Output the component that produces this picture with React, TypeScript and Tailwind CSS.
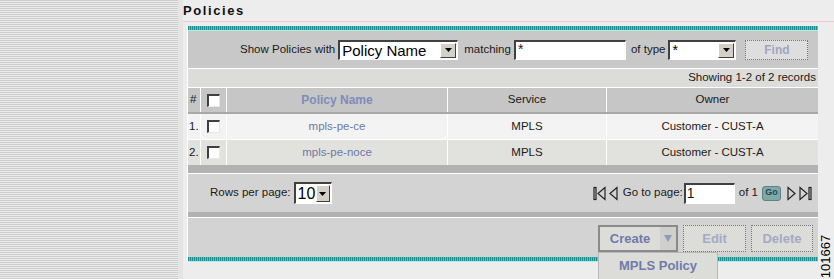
import React from 'react'

const font = { fontFamily: '"Liberation Sans", Arial, sans-serif' }

const Checkbox = () => (
    <span className="inline-block w-[13px] h-[13px] bg-white border-t-2 border-l-2 border-t-[#404040] border-l-[#404040] border-r border-b border-r-[#e8e8e8] border-b-[#e8e8e8]" />
)

const SelectBox = ({ value, className, textClass }: { value: string; className: string; textClass: string }) => (
    <div className={`shrink-0 flex items-stretch bg-white border-t-2 border-l-2 border-t-[#404040] border-l-[#404040] border-r border-b border-r-white border-b-white ${className}`}>
        <span className={`flex-1 pl-[2px] leading-none flex items-center text-black whitespace-nowrap ${textClass}`}>{value}</span>
        <span className="w-[16px] m-[1px] bg-[#d4d0c8] border border-t-white border-l-white border-r-[#404040] border-b-[#404040] flex items-center justify-center">
            <svg width="7" height="4" viewBox="0 0 7 4"><path d="M0 0h7L3.5 4z" fill="#000" /></svg>
        </span>
    </div>
)

const TealBar = () => (
    <div className="h-[5px] bg-[repeating-linear-gradient(90deg,#17908f_0px,#17908f_1px,#5fbfbf_1px,#5fbfbf_2px)] border-b border-b-[#bfe6e6]" />
)

const FirstIcon = () => (
    <svg width="13" height="15" viewBox="0 0 13 15" fill="none" stroke="#222" strokeWidth="1.2">
        <rect x="1" y="1.5" width="2" height="12" />
        <path d="M12 1.5L5 7.5l7 6z" />
    </svg>
)
const PrevIcon = () => (
    <svg width="9" height="15" viewBox="0 0 9 15" fill="none" stroke="#222" strokeWidth="1.2">
        <path d="M8 1.5L1 7.5l7 6z" />
    </svg>
)
const NextIcon = () => (
    <svg width="9" height="15" viewBox="0 0 9 15" fill="none" stroke="#222" strokeWidth="1.2">
        <path d="M1 1.5l7 6-7 6z" />
    </svg>
)
const LastIcon = () => (
    <svg width="13" height="15" viewBox="0 0 13 15" fill="none" stroke="#222" strokeWidth="1.2">
        <path d="M1 1.5l7 6-7 6z" />
        <rect x="10" y="1.5" width="2" height="12" />
    </svg>
)

const rows = [
    { n: '1.', name: 'mpls-pe-ce', service: 'MPLS', owner: 'Customer - CUST-A', bg: 'bg-[#f3f3f3]', h: 'h-[26px] border-b border-b-white' },
    { n: '2.', name: 'mpls-pe-noce', service: 'MPLS', owner: 'Customer - CUST-A', bg: 'bg-[#e1e1dd]', h: 'h-[25px]' },
]

const cols = 'grid grid-cols-[13px_26px_221px_159px_1fr]'

export default function App() {
    return (
        <div className="w-[834px] h-[279px] overflow-hidden flex bg-[#ededed] text-[11.5px] text-[#1a1a1a] relative" style={font}>
            {/* striped side panel */}
            <div className="w-[178px] h-full bg-[repeating-linear-gradient(180deg,#cdcdcd_0px,#cdcdcd_1px,#ececec_1px,#ececec_2px)]" />
            <div className="w-[5px] h-full bg-[#e4e4e4]" />

            <div className="flex-1 flex flex-col">
                <div className="h-[22px] border-b border-b-[#f0c8d4] flex items-end pb-[4px]">
                    <h1 className="text-[13px] font-bold tracking-[1.6px] leading-none text-[#111]">Policies</h1>
                </div>

                <div className="ml-[4px] mr-[16px] mt-[4px] border-l border-l-white relative">
                    <TealBar />

                    {/* filter */}
                    <div className="h-[38px] bg-[#c8c8c8] flex items-center pl-[52px] gap-[3px] border-b border-b-white whitespace-nowrap">
                        <span className="shrink-0">Show Policies with</span>
                        <SelectBox value="Policy Name" className="w-[120px] h-[20px]" textClass="text-[15px]" />
                        <span className="shrink-0 ml-[3px]">matching</span>
                        <div className="shrink-0 w-[112px] h-[20px] bg-white border-t-2 border-l-2 border-t-[#404040] border-l-[#404040] border-r border-b border-r-white border-b-white pl-[2px] text-[14px] leading-[15px]">*</div>
                        <span className="shrink-0 ml-[2px]">of type</span>
                        <SelectBox value="*" className="w-[68px] h-[20px]" textClass="text-[14px] items-start pt-[1px]" />
                        <button className="shrink-0 ml-[6px] w-[63px] h-[20px] bg-[#dedede] border border-dotted border-[#777] font-bold text-[12px] text-[#9ea6c4]">Find</button>
                    </div>

                    <div className="h-[19px] bg-[#dcdcda] flex items-center justify-end pr-[2px] border-b border-b-white">
                        Showing 1-2 of 2 records
                    </div>

                    {/* table header */}
                    <div className={`${cols} h-[26px] bg-[#c6c6c6] border-b-2 border-b-[#a8a8a8]`}>
                        <div className="flex items-center pl-[2px] border-r border-r-white">#</div>
                        <div className="flex items-center justify-center border-r border-r-white"><Checkbox /></div>
                        <div className="flex items-center justify-center border-r border-r-white font-bold text-[12px] text-[#7f8cb8]">Policy Name</div>
                        <div className="flex items-center justify-center border-r border-r-white">Service</div>
                        <div className="flex items-center justify-center">Owner</div>
                    </div>

                    {rows.map(r => (
                        <div key={r.n} className={`${cols} ${r.h} ${r.bg}`}>
                            <div className="flex items-center pl-[1px] border-r border-r-white">{r.n}</div>
                            <div className="flex items-center justify-center border-r border-r-white"><Checkbox /></div>
                            <div className="flex items-center justify-center border-r border-r-white text-[#6d79a8]">{r.name}</div>
                            <div className="flex items-center justify-center border-r border-r-white">{r.service}</div>
                            <div className="flex items-center justify-center">{r.owner}</div>
                        </div>
                    ))}

                    <div className="h-[9px] bg-[#b2b2b2] border-b border-b-white" />

                    {/* paging */}
                    <div className="h-[38px] bg-[#d3d3d3] flex items-center justify-between pl-[22px] pr-[6px]">
                        <div className="flex items-center gap-[3px]">
                            <span>Rows per page:</span>
                            <SelectBox value="10" className="w-[38px] h-[22px]" textClass="text-[16px]" />
                        </div>
                        <div className="flex items-center">
                            <span className="ml-[0px]"><FirstIcon /></span>
                            <span className="ml-[3px]"><PrevIcon /></span>
                            <span className="ml-[5px]">Go to page:</span>
                            <div className="ml-[1px] w-[51px] h-[21px] bg-white border-t-2 border-l-2 border-t-[#404040] border-l-[#404040] border-r border-b border-r-white border-b-white pl-[1px] text-[14px] leading-[16px]">1</div>
                            <span className="ml-[4px]">of 1</span>
                            <span className="ml-[4px] w-[19px] h-[15px] rounded-[3px] bg-[#7fa9a9] border border-[#5b8585] text-[9px] font-bold text-[#1e4a5a] flex items-center justify-center">Go</span>
                            <span className="ml-[6px]"><NextIcon /></span>
                            <span className="ml-[3px]"><LastIcon /></span>
                        </div>
                    </div>

                    <div className="h-[6px] bg-[#b2b2b2] border-b border-b-white" />

                    {/* actions */}
                    <div className="h-[39px] bg-[#d3d3d3] flex items-start justify-end pt-[7px] pr-[5px] gap-[5px]">
                        <div className="relative">
                            <div className="w-[80px] h-[27px] flex bg-[#dcdcd9] border-2 border-[#8a8a8a] font-bold text-[13px] text-[#6f7ba9]">
                                <span className="flex-1 flex items-center justify-center">Create</span>
                                <span className="w-[16px] flex items-center justify-center bg-[#cfcfcc]">
                                    <svg width="8" height="7" viewBox="0 0 8 7"><path d="M0 0h8L4 7z" fill="#8c9ac0" /></svg>
                                </span>
                            </div>
                            <div className="absolute left-0 top-[27px] w-[120px] h-[28px] bg-[#dcdcd9] border border-[#b8b8b8] flex items-center justify-center font-bold text-[13px] text-[#6f7ba9] z-10">
                                MPLS Policy
                            </div>
                        </div>
                        <button className="w-[63px] h-[27px] bg-[#dcdcd9] border border-dotted border-[#777] font-bold text-[13px] text-[#a3aac6]">Edit</button>
                        <button className="w-[62px] h-[27px] bg-[#dcdcd9] border border-dotted border-[#777] font-bold text-[13px] text-[#a3aac6]">Delete</button>
                    </div>

                    <TealBar />
                </div>
            </div>

            <div className="absolute right-[1px] top-[234px] w-[14px] h-[44px] flex items-center justify-center">
                <span className="-rotate-90 whitespace-nowrap text-[13px] text-black leading-none">101667</span>
            </div>
        </div>
    )
}
